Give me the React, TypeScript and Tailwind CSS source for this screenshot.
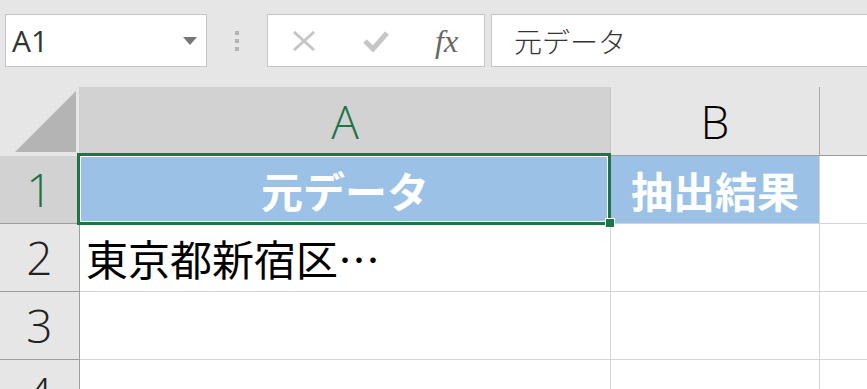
const cjk = "font-['Noto_Sans_CJK_JP','Noto_Sans',sans-serif]";
const latin = "font-['Open_Sans','Noto_Sans',sans-serif]";

function Toolbar() {
  return (
    <div className="flex h-[87px] shrink-0 items-start pt-[14px]">
      {/* name box */}
      <div className="ml-[5px] flex h-[53px] w-[202px] items-center justify-between border border-[#c6c6c6] bg-white pl-[6px] pr-[9px]">
        <span className={`${latin} text-[30px] leading-none text-[#333]`}>A1</span>
        <svg width="14" height="8" viewBox="0 0 14 8">
          <polygon points="0,0 14,0 7,8" fill="#777" />
        </svg>
      </div>
      {/* grip */}
      <div className="flex h-[53px] w-[60px] flex-col items-center justify-center gap-[4px]">
        <span className="h-[4px] w-[4px] bg-[#b4b4b4]" />
        <span className="h-[4px] w-[4px] bg-[#b4b4b4]" />
        <span className="h-[4px] w-[4px] bg-[#b4b4b4]" />
      </div>
      {/* cancel / enter / fx */}
      <div className="flex h-[53px] w-[218px] items-center border border-[#c6c6c6] bg-white pl-[25px]">
        <svg width="22" height="20" viewBox="0 0 22 20">
          <path d="M1 1 L21 19 M21 1 L1 19" stroke="#c6c6c6" strokeWidth="3" fill="none" />
        </svg>
        <svg className="ml-[48px]" width="26" height="22" viewBox="0 0 26 22">
          <polyline points="2,11 10,19 24,3" stroke="#c6c6c6" strokeWidth="5" fill="none" />
        </svg>
        <span className="ml-[46px] font-['Liberation_Serif',serif] text-[32px] italic leading-none text-[#666]">
          fx
        </span>
      </div>
      {/* formula bar */}
      <div className="ml-[6px] flex h-[53px] flex-1 items-center border border-r-0 border-[#c6c6c6] bg-white pl-[22px]">
        <span className={`${cjk} text-[28px] font-light leading-none text-[#333]`}>元データ</span>
      </div>
    </div>
  );
}

function HeaderRow() {
  return (
    <div className="flex h-[69px] shrink-0">
      <div className="w-[80px] shrink-0 border-r border-[#d0d0d0] bg-[#e6e6e6]">
        <svg width="79" height="69" viewBox="0 0 79 69">
          <polygon points="15,65 76,4 76,65" fill="#b4b4b4" />
        </svg>
      </div>
      <div
        className={`${latin} flex w-[531px] shrink-0 items-center justify-center border-r border-b border-r-[#c6c6c6] border-b-[#9e9e9e] bg-[#d2d2d2] text-[46px] font-light text-[#217346]`}
      >
        A
      </div>
      <div
        className={`${latin} flex w-[209px] shrink-0 items-center justify-center border-r border-b border-r-[#ababab] border-b-[#9e9e9e] bg-[#e6e6e6] text-[46px] font-light text-black`}
      >
        B
      </div>
      <div className="flex-1 border-b border-[#9e9e9e] bg-[#e6e6e6]" />
    </div>
  );
}

function RowHead({ n, selected }: { n: number; selected?: boolean }) {
  return (
    <div
      className={`${latin} flex w-[80px] shrink-0 items-center justify-center border-r border-b border-[#9e9e9e] text-[46px] font-light ${
        selected ? "bg-[#d2d2d2] text-[#217346]" : "bg-[#e6e6e6] text-[#222]"
      }`}
    >
      {n}
    </div>
  );
}

export default function App() {
  const cell = "shrink-0 border-r border-b border-[#d4d4d4]";
  return (
    <div className="flex h-[389px] w-[867px] flex-col overflow-hidden bg-[#e6e6e6]">
      <Toolbar />
      <HeaderRow />

      {/* row 1 */}
      <div className="flex h-[68px] shrink-0 bg-white">
        <RowHead n={1} selected />
        <div
          className={`${cell} ${cjk} relative flex w-[531px] items-center justify-center bg-[#9bc2e6] text-[42px] font-bold text-white`}
        >
          元データ
          <div className="absolute -top-[3px] -left-[3px] -right-[1px] -bottom-[2px] border-[3px] border-[#217346]">
            <div className="h-full w-full border border-white" />
          </div>
          <div className="absolute -right-[5px] -bottom-[5px] h-[10px] w-[10px] border border-white bg-[#217346]" />
        </div>
        <div
          className={`${cell} ${cjk} flex w-[209px] items-center justify-center bg-[#9bc2e6] text-[42px] font-bold text-white`}
        >
          抽出結果
        </div>
        <div className="flex-1 border-b border-[#d4d4d4]" />
      </div>

      {/* row 2 */}
      <div className="flex h-[68px] shrink-0 bg-white">
        <RowHead n={2} />
        <div className={`${cell} ${cjk} flex w-[531px] items-center pl-[6px] text-[42px] text-black`}>
          東京都新宿区…
        </div>
        <div className={`${cell} w-[209px]`} />
        <div className="flex-1 border-b border-[#d4d4d4]" />
      </div>

      {/* row 3 */}
      <div className="flex h-[68px] shrink-0 bg-white">
        <RowHead n={3} />
        <div className={`${cell} w-[531px]`} />
        <div className={`${cell} w-[209px]`} />
        <div className="flex-1 border-b border-[#d4d4d4]" />
      </div>

      {/* row 4 */}
      <div className="flex h-[68px] shrink-0 bg-white">
        <RowHead n={4} />
        <div className={`${cell} w-[531px]`} />
        <div className={`${cell} w-[209px]`} />
        <div className="flex-1 border-b border-[#d4d4d4]" />
      </div>
    </div>
  );
}
